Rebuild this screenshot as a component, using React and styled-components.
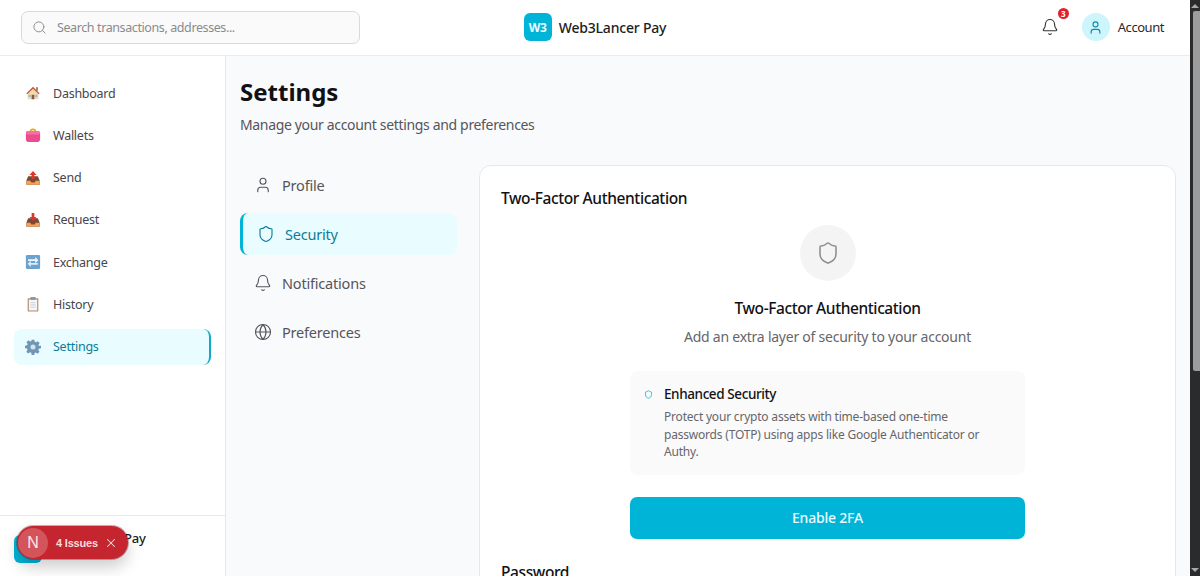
import React from 'react'
import styled, { createGlobalStyle } from 'styled-components'
import { Search, Bell, User, Shield, Globe, X } from 'lucide-react'

const GlobalStyle = createGlobalStyle`
    html, body {
        margin: 0;
        height: 576px;
        overflow: hidden;
        background: #fff;
        font-family: "Noto Sans", "Open Sans", sans-serif;
        color: #111;
    }
    * { box-sizing: border-box; }
`

const Screen = styled.div`
    display: flex;
    height: 576px;
    overflow: hidden;
`
const Page = styled.div`
    flex: 1;
    min-width: 0;
    display: flex;
    flex-direction: column;
`
const ScrollTrack = styled.div`
    width: 10px;
    display: flex;
    flex-direction: column;
    align-items: flex-end;
    background: #2b2b2b;
    padding: 4px 0;
`
const ScrollArrow = styled.div`
    width: 0;
    height: 0;
    margin-right: 1px;
    border-left: 4px solid transparent;
    border-right: 4px solid transparent;
    border-bottom: ${p => (p.$down ? '0' : '4px solid #a8a8a8')};
    border-top: ${p => (p.$down ? '4px solid #a8a8a8' : '0')};
    margin-top: ${p => (p.$down ? 'auto' : '0')};
`
const ScrollThumb = styled.div`
    width: 7px;
    height: 360px;
    margin-top: 3px;
    background: #9c9c9c;
    border-radius: 2px 0 0 2px;
`

/* header */
const Header = styled.header`
    height: 56px;
    flex: none;
    display: grid;
    grid-template-columns: 1fr auto 1fr;
    align-items: center;
    padding: 0 21px 1px;
    background: #fff;
    border-bottom: 1px solid #ececee;
`
const SearchBox = styled.div`
    width: 339px;
    height: 33px;
    display: flex;
    align-items: center;
    gap: 10px;
    padding: 0 10px;
    background: #fafafa;
    border: 1px solid #d9d9dc;
    border-radius: 7px;
    color: #8a8a8e;
    font-size: 12.5px;
    letter-spacing: -0.4px;
`
const Brand = styled.div`
    display: flex;
    align-items: center;
    gap: 7px;
    font-size: 14px;
    font-weight: 500;
    letter-spacing: -0.2px;
    color: #1c1c22;
`
const BrandMark = styled.div`
    width: 28px;
    height: 28px;
    flex: none;
    display: flex;
    align-items: center;
    justify-content: center;
    background: #00b4d8;
    border-radius: 6px;
    color: #e9fbff;
    font-size: 12px;
    font-weight: 700;
`
const HeaderRight = styled.div`
    display: flex;
    justify-content: flex-end;
    align-items: center;
    padding-right: 5px;
`
const BellWrap = styled.div`
    position: relative;
    display: flex;
    color: #333;
    margin-right: 23px;
`
const BellBadge = styled.span`
    position: absolute;
    top: -10px;
    right: -10px;
    width: 11px;
    height: 11px;
    border-radius: 50%;
    background: #e5202e;
    color: #fff;
    font-size: 8px;
    font-weight: 700;
    line-height: 11px;
    text-align: center;
`
const Avatar = styled.div`
    width: 28px;
    height: 28px;
    display: flex;
    align-items: center;
    justify-content: center;
    border-radius: 50%;
    background: #cdf5fc;
    color: #0e8ba8;
    margin-right: 8px;
`
const AccountName = styled.span`
    font-size: 13px;
    color: #2a2a30;
    letter-spacing: -0.45px;
`

/* body */
const Body = styled.div`
    flex: 1;
    min-height: 0;
    display: flex;
`
const Sidebar = styled.aside`
    width: 226px;
    flex: none;
    display: flex;
    flex-direction: column;
    background: #fff;
    border-right: 1px solid #e8e8ec;
`
const SideNav = styled.nav`
    flex: 1;
    display: flex;
    flex-direction: column;
    gap: 6.3px;
    padding: 19px 14px 0;
`
const SideItem = styled.div`
    height: 36px;
    display: flex;
    align-items: center;
    gap: 12px;
    padding: 0 10px 0 11px;
    border-radius: 8px;
    font-size: 12.5px;
    letter-spacing: -0.25px;
    color: ${p => (p.$active ? '#0b7c99' : '#46464c')};
    background: ${p => (p.$active ? '#e9fcff' : 'transparent')};
    border-right: ${p => (p.$active ? '2px solid #12a9c9' : '0')};
`
const Emoji = styled.svg`
    width: 16px;
    height: 16px;
    flex: none;
`
const SideFooter = styled.div`
    position: relative;
    height: 61px;
    flex: none;
    display: flex;
    align-items: center;
    gap: 4px;
    padding: 0 14px 4px;
    border-top: 1px solid #e8e8ec;
    font-size: 13px;
    font-weight: 500;
    letter-spacing: -0.2px;
    color: #1c1c22;
`
const FooterMark = styled(BrandMark)`
    margin-top: 9px;
`
const FooterText = styled.span`
    margin-top: -13px;
`
const IssuesToast = styled.div`
    position: absolute;
    left: 17px;
    top: 10px;
    width: 111px;
    height: 33px;
    display: flex;
    align-items: center;
    padding-left: 1px;
    border-radius: 17px;
    background: #c5252f;
    color: #f8dcdc;
    font-family: "Liberation Sans", sans-serif;
    font-size: 11px;
    font-weight: 700;
    box-shadow: 0 8px 16px rgba(0, 0, 0, 0.2), 0 0 0 1px rgba(120, 30, 40, 0.35);
`
const NextLogo = styled.div`
    width: 30px;
    height: 30px;
    display: flex;
    align-items: center;
    justify-content: center;
    margin-right: 8px;
    border-radius: 50%;
    background: #d4545c;
    color: #fbe9e9;
    font-size: 16px;
    font-weight: 400;
`
const ToastClose = styled(X)`
    margin-left: 6px;
`

/* main */
const Main = styled.main`
    flex: 1;
    min-width: 0;
    padding: 18px 14px 0;
    background: #f9fafb;
    overflow: hidden;
`
const PageTitle = styled.h1`
    margin: 0;
    font-size: 24px;
    line-height: 36px;
    font-weight: 700;
    color: #111114;
`
const PageSub = styled.p`
    margin: 5px 0 0;
    font-size: 14px;
    line-height: 20px;
    letter-spacing: -0.34px;
    color: #55555b;
`
const Columns = styled.div`
    display: flex;
    align-items: flex-start;
    margin-top: 29px;
    gap: 22px;
`
const Tabs = styled.div`
    width: 217px;
    flex: none;
    display: flex;
    flex-direction: column;
    gap: 7.3px;
`
const Tab = styled.div`
    height: 42px;
    display: flex;
    align-items: center;
    gap: 10px;
    padding: 0 0 1px 14px;
    border-radius: 8px;
    font-size: 14.5px;
    letter-spacing: -0.2px;
    color: ${p => (p.$active ? '#0b7c99' : '#55555b')};
    background: ${p => (p.$active ? '#e9fcff' : 'transparent')};
    border-left: ${p => (p.$active ? '3px solid #00b4d8' : '0')};
`
const Card = styled.section`
    flex: 1;
    min-width: 0;
    margin-top: 1px;
    padding: 20px 21px 21px;
    background: #fff;
    border: 1px solid #e8e8ec;
    border-radius: 12px;
`
const CardTitle = styled.h2`
    margin: 0;
    font-size: 15.5px;
    line-height: 24px;
    font-weight: 500;
    letter-spacing: -0.4px;
    color: #111114;
`
const Center = styled.div`
    display: flex;
    flex-direction: column;
    align-items: center;
`
const IconCircle = styled.div`
    width: 56px;
    height: 56px;
    margin-top: 15px;
    display: flex;
    align-items: center;
    justify-content: center;
    border-radius: 50%;
    background: #f4f4f5;
    color: #8b8b90;
`
const Heading = styled.h3`
    margin: 15px 0 0;
    font-size: 15.5px;
    line-height: 24px;
    font-weight: 500;
    letter-spacing: -0.4px;
    color: #111114;
`
const Lead = styled.p`
    margin: 7px 0 0;
    font-size: 14px;
    line-height: 20px;
    letter-spacing: -0.24px;
    color: #66666c;
`
const InfoBox = styled.div`
    width: 395px;
    height: 104px;
    margin-top: 24px;
    display: flex;
    gap: 11px;
    padding: 13px 14px;
    background: #fafafa;
    border-radius: 8px;
`
const InfoIcon = styled(Shield)`
    flex: none;
    margin-top: 6px;
    color: #19a9c9;
`
const InfoBody = styled.div`
    width: 332px;
`
const InfoTitle = styled.div`
    font-size: 13.5px;
    line-height: 20px;
    font-weight: 500;
    letter-spacing: -0.4px;
    color: #111114;
`
const InfoText = styled.p`
    margin: 4px 0 0;
    font-size: 12px;
    line-height: 17.5px;
    letter-spacing: -0.2px;
    color: #66666c;
`
const EnableButton = styled.button`
    width: 395px;
    height: 42px;
    margin-top: 22px;
    padding: 0 0 2px;
    border: 0;
    border-radius: 7px;
    background: #00b4d8;
    color: #e9fbff;
    font-family: inherit;
    font-size: 14px;
    font-weight: 500;
    letter-spacing: -0.2px;
`
const PasswordTitle = styled(CardTitle)`
    margin-top: 21px;
`

const HouseIcon = () => (
    <Emoji viewBox="0 0 18 18">
        <path d="M3 9v7h12V9L9 3.500z" fill="#f4d9b0" />
        <path d="M1.500 9.500 9 2l7.500 7.500-1 1L9 4.200 2.500 10.500z" fill="#c2552f" />
        <rect x="12.500" y="2.500" width="2" height="4" fill="#a5705a" />
        <rect x="7.500" y="11" width="3" height="5" fill="#8a5a3c" />
        <rect x="4" y="11" width="2.500" height="2.500" fill="#7cc4e0" />
        <rect x="11.500" y="11" width="2.500" height="2.500" fill="#7cc4e0" />
    </Emoji>
)
const PurseIcon = () => (
    <Emoji viewBox="0 0 18 18">
        <path d="M6 5a3 2.500 0 0 1 6 0" fill="none" stroke="#d9a520" strokeWidth="1.600" />
        <rect x="1" y="4.500" width="16" height="12.500" rx="3.500" fill="#ee4b8e" />
        <rect x="1" y="4.500" width="16" height="4" rx="2" fill="#f56fa8" />
        <circle cx="7.500" cy="3.500" r="1.100" fill="#eebb33" />
        <circle cx="10.500" cy="3.500" r="1.100" fill="#eebb33" />
    </Emoji>
)
const TrayIcon = ({ up }) => (
    <Emoji viewBox="0 0 18 18">
        <path d="M3.500 7h11l2 5v4.500h-15V12z" fill="#7a4a32" />
        <path d="M1.500 12h4.500l1 2h4l1-2h4.500v4.500h-15z" fill="#f0a35e" />
        <path
            d={up ? 'M9 1 13 5.500H10.500V10h-3V5.500H5z' : 'M7.500 1h3v4.500H13L9 10 5 5.500h2.500z'}
            fill="#e2342c"
        />
    </Emoji>
)
const ArrowsIcon = () => (
    <Emoji viewBox="0 0 18 18">
        <rect x="1" y="1" width="16" height="16" rx="1.500" fill="#6aa3cf" />
        <path d="M3.500 6h8V3.500L15 7l-3.500 3.500V8h-8z" fill="#f3f6f9" />
        <path d="M14.500 12h-8v2.500L3 11l3.500-3.500V10h8z" fill="#e3ebf2" />
    </Emoji>
)
const ClipboardIcon = () => (
    <Emoji viewBox="0 0 18 18">
        <rect x="3" y="2.500" width="12" height="15" rx="1" fill="#b58a68" />
        <rect x="4.300" y="4" width="9.400" height="12.300" fill="#f4f6f8" />
        <rect x="6" y="1" width="6" height="3.500" rx="0.800" fill="#8d99a3" />
        <path d="M6 7.500h6M6 10h6M6 12.500h6" stroke="#c7d0d8" strokeWidth="1" />
    </Emoji>
)
const GearIcon = () => (
    <Emoji viewBox="0 0 24 24">
        <path
            d="M10 1h4l.6 3.200 1.900.8 2.700-1.800 2.800 2.800-1.800 2.700.8 1.900L24 10v4l-3.200.6-.8 1.900 1.800 2.700-2.800 2.800-2.700-1.800-1.900.8L14 24h-4l-.6-3.200-1.900-.8-2.700 1.800-2.800-2.800 1.800-2.700-.8-1.900L0 14v-4l3.200-.6.8-1.900-1.800-2.700 2.800-2.800 2.700 1.800 1.900-.8z"
            fill="#6f97b5"
        />
        <circle cx="12" cy="12" r="3.800" fill="#d6e2ec" />
    </Emoji>
)

const sideLinks = [
    { label: 'Dashboard', icon: <HouseIcon /> },
    { label: 'Wallets', icon: <PurseIcon /> },
    { label: 'Send', icon: <TrayIcon up /> },
    { label: 'Request', icon: <TrayIcon /> },
    { label: 'Exchange', icon: <ArrowsIcon /> },
    { label: 'History', icon: <ClipboardIcon /> },
    { label: 'Settings', icon: <GearIcon />, active: true },
]

const tabs = [
    { label: 'Profile', Icon: User },
    { label: 'Security', Icon: Shield, active: true },
    { label: 'Notifications', Icon: Bell },
    { label: 'Preferences', Icon: Globe },
]

export default function App() {
    return (
        <Screen>
            <GlobalStyle />
            <Page>
                <Header>
                    <SearchBox>
                        <Search size={15} strokeWidth={1.5} />
                        Search transactions, addresses...
                    </SearchBox>
                    <Brand>
                        <BrandMark>W3</BrandMark>
                        Web3Lancer Pay
                    </Brand>
                    <HeaderRight>
                        <BellWrap>
                            <Bell size={18} strokeWidth={1.5} />
                            <BellBadge>3</BellBadge>
                        </BellWrap>
                        <Avatar>
                            <User size={15} strokeWidth={1.75} />
                        </Avatar>
                        <AccountName>Account</AccountName>
                    </HeaderRight>
                </Header>
                <Body>
                    <Sidebar>
                        <SideNav>
                            {sideLinks.map(link => (
                                <SideItem key={link.label} $active={link.active}>
                                    {link.icon}
                                    {link.label}
                                </SideItem>
                            ))}
                        </SideNav>
                        <SideFooter>
                            <FooterMark>W3</FooterMark>
                            <FooterText>Web3Lancer Pay</FooterText>
                            <IssuesToast>
                                <NextLogo>N</NextLogo>
                                4 Issues
                                <ToastClose size={14} strokeWidth={1.75} />
                            </IssuesToast>
                        </SideFooter>
                    </Sidebar>
                    <Main>
                        <PageTitle>Settings</PageTitle>
                        <PageSub>Manage your account settings and preferences</PageSub>
                        <Columns>
                            <Tabs>
                                {tabs.map(({ label, Icon, active }) => (
                                    <Tab key={label} $active={active}>
                                        <Icon size={18} strokeWidth={1.5} />
                                        {label}
                                    </Tab>
                                ))}
                            </Tabs>
                            <Card>
                                <CardTitle>Two-Factor Authentication</CardTitle>
                                <Center>
                                    <IconCircle>
                                        <Shield size={24} strokeWidth={1.5} />
                                    </IconCircle>
                                    <Heading>Two-Factor Authentication</Heading>
                                    <Lead>Add an extra layer of security to your account</Lead>
                                    <InfoBox>
                                        <InfoIcon size={9} strokeWidth={2} />
                                        <InfoBody>
                                            <InfoTitle>Enhanced Security</InfoTitle>
                                            <InfoText>
                                                Protect your crypto assets with time-based one-time
                                                passwords (TOTP) using apps like Google Authenticator
                                                or Authy.
                                            </InfoText>
                                        </InfoBody>
                                    </InfoBox>
                                    <EnableButton>Enable 2FA</EnableButton>
                                </Center>
                                <PasswordTitle>Password</PasswordTitle>
                            </Card>
                        </Columns>
                    </Main>
                </Body>
            </Page>
            <ScrollTrack>
                <ScrollArrow />
                <ScrollThumb />
                <ScrollArrow $down />
            </ScrollTrack>
        </Screen>
    )
}
